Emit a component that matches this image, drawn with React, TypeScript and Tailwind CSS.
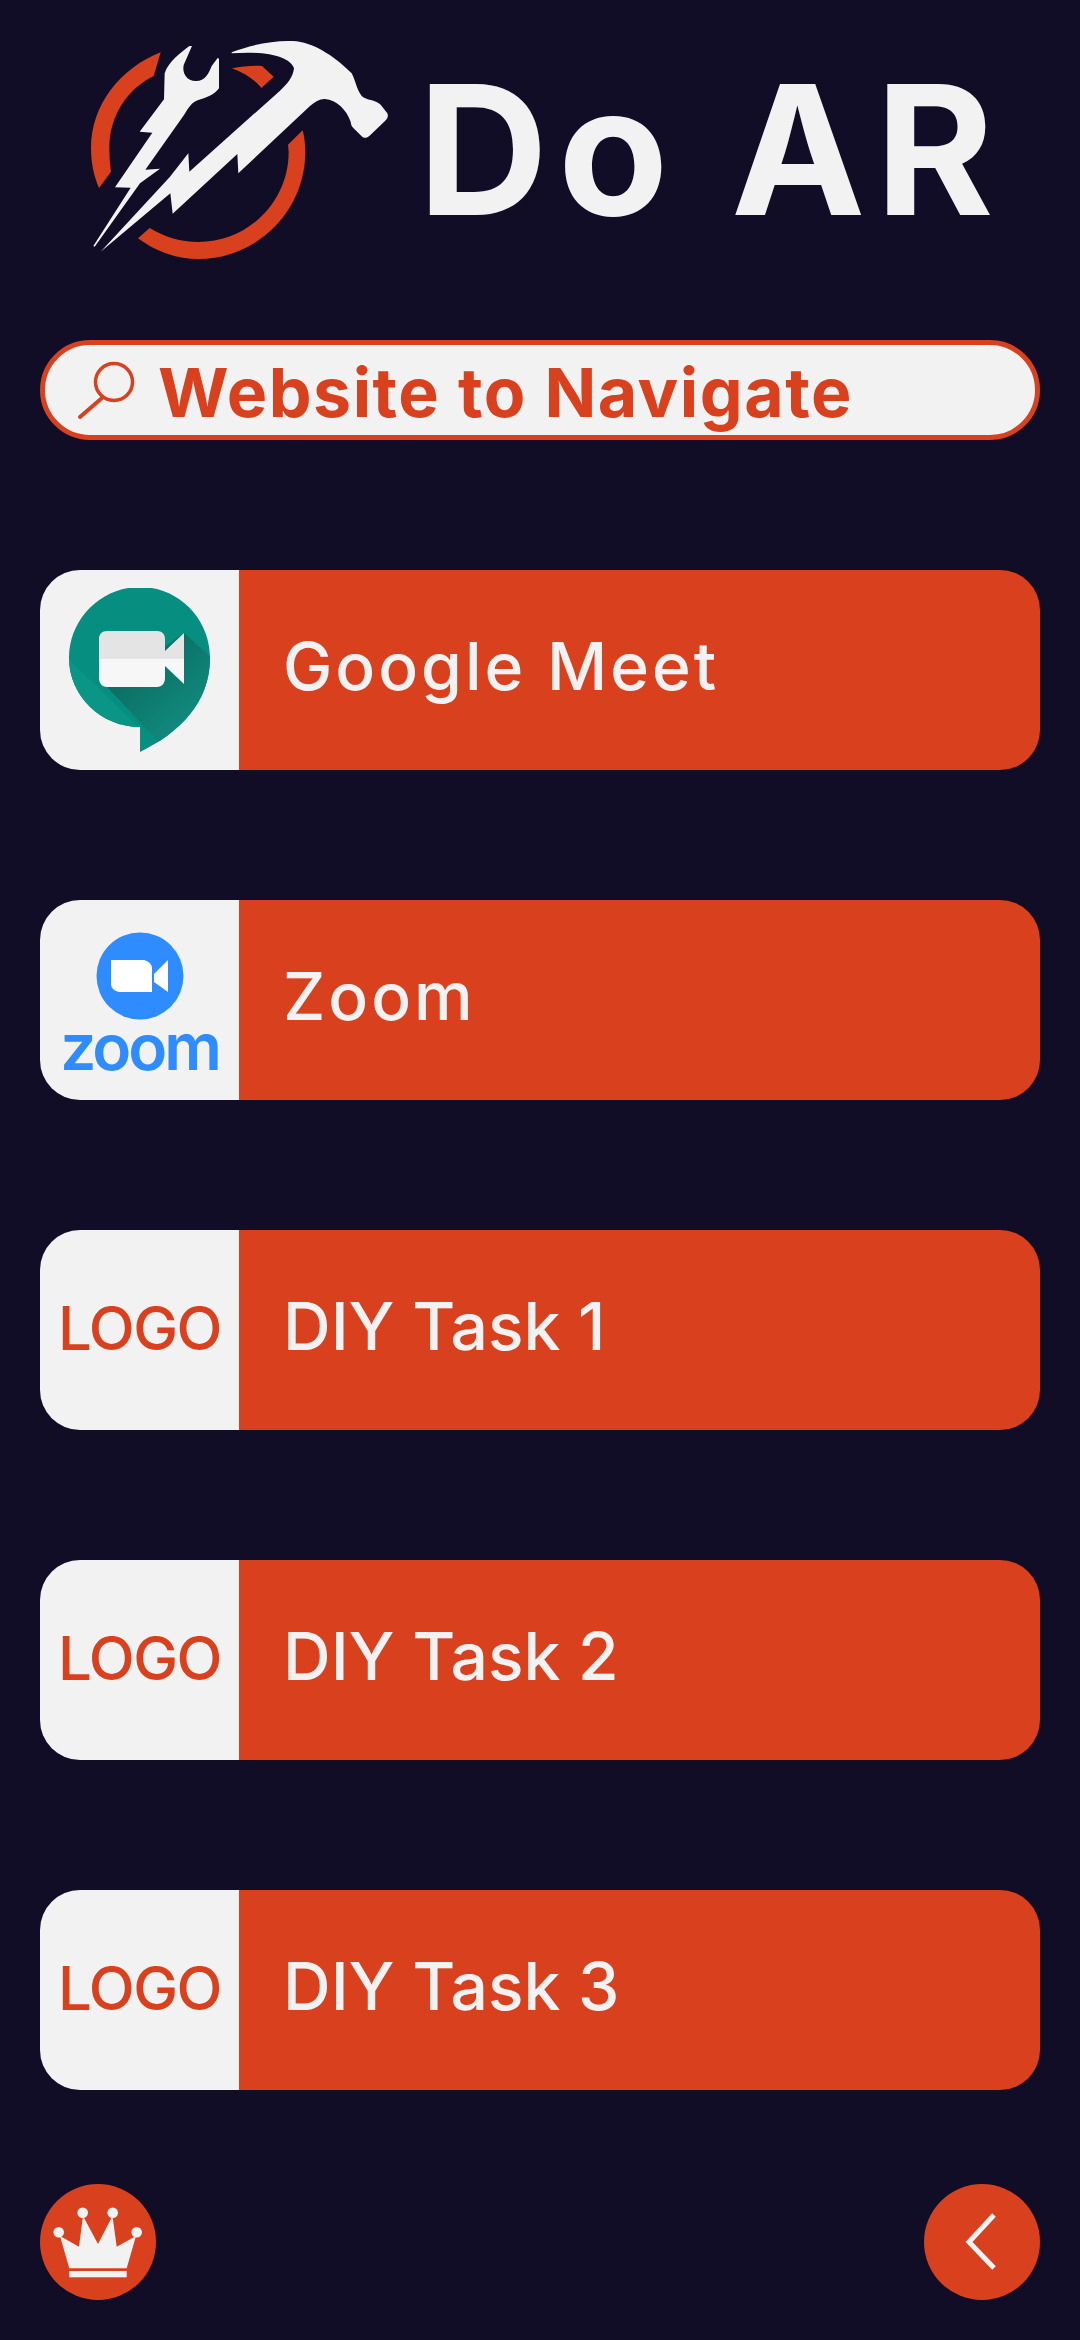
import React from 'react';

const font = { fontFamily: 'Inter, "Open Sans", sans-serif' };

const BrandLogo = () => (
  <svg viewBox="0 0 1080 750" className="w-[360px] h-[250px] shrink-0">
    {/* red ring pieces */}
    <path d="M302 97 L281 168 C205 205 148 285 148 385 C148 410 150 435 153 455 L117 504 C100 465 93 425 93 385 C93 255 180 145 302 97 Z" fill="#d9411e" />
    <path d="M516 145 C545 139 580 136 606 138 L641 170 L604 204 C585 180 555 160 516 145 Z" fill="#d9411e" />
    <path d="M728 331 C733 350 736 375 736 396 C736 572 592 717 415 717 C350 717 288 695 234 655 L269 624 C315 652 362 666 415 666 C565 666 686 545 686 396 L684 374 Z" fill="#d9411e" />
    {/* wrench and bolt */}
    <path d="M396 78 L371 135 C366 160 380 183 408 183 C436 183 446 160 455 138 L473 114 L477 116 L477 205 C465 222 440 234 415 240 C395 246 385 265 372 285 L256 449 L300 446 L240 490 L104 680 L100 678 L212 503 L165 502 L277 338 L239 335 L312 238 L314 160 C325 125 360 100 388 78 Z" fill="#f2f2f2" />
    {/* hammer and bolt */}
    <path d="M515 97 C570 75 650 58 710 64 C770 72 830 115 875 160 C888 185 888 205 905 228 C920 242 945 238 962 254 L982 280 C986 290 982 296 975 303 L932 344 C920 355 912 356 905 349 L880 324 C875 318 873 315 872 305 C860 270 830 240 795 237 C780 236 765 245 750 258 L535 460 L532 402 L338 581 L331 520 L122 695 L330 470 L385 400 L388 455 L660 212 C680 195 700 170 702 145 C690 110 620 92 515 100 Z" fill="#f2f2f2" />
  </svg>
);

const SearchIcon = () => (
  <svg viewBox="0 0 60 60" className="w-[60px] h-[60px] shrink-0">
    <circle cx="38" cy="22" r="18.500" fill="none" stroke="#d9411e" strokeWidth="3.5" />
    <path d="M26 38 L4 57" stroke="#d9411e" strokeWidth="4" strokeLinecap="round" />
  </svg>
);

const MeetIcon = () => (
  <svg viewBox="0 0 141 164" className="w-[141px] h-[164px] shrink-0">
    <defs>
      <clipPath id="bubble">
        <path d="M71 139 C32 139 0 108 0 70 C0 31 32 -1 71 -1 C110 -1 141 31 141 70 C141 115 110 145 71 164 Z" />
      </clipPath>
      <linearGradient id="shade" gradientUnits="userSpaceOnUse" x1="60" y1="85" x2="110" y2="140">
        <stop offset="0" stopColor="#0b6f65" />
        <stop offset="1" stopColor="#11897c" />
      </linearGradient>
    </defs>
    <g clipPath="url(#bubble)">
      <rect y="-2" width="141" height="166" fill="#068f80" />
      <path d="M0 72 L71 140 L71 164 L0 164 Z" fill="#0a9686" />
      <path d="M38 99 L115 45 L141 68 L141 164 L100 164 L87 151 Z" fill="url(#shade)" />
    </g>
    <path d="M38 43 L88 43 C93 43 96 46 96 51 L96 63 L115 45 L115 71 L30 71 L30 51 C30 46 33 43 38 43 Z" fill="#e4e4e4" />
    <path d="M30 71 L115 71 L115 96 L96 78 L96 90 C96 95 93 99 88 99 L38 99 C33 99 30 95 30 90 Z" fill="#f7f7f7" />
  </svg>
);

const ZoomIcon = () => (
  <div className="flex flex-col items-center pt-[1px]">
    <svg viewBox="0 0 88 88" className="w-[88px] h-[88px] shrink-0">
      <circle cx="44" cy="44" r="43.500" fill="#2e8cff" />
      <path d="M15 28 L47 28 C51 28 56 32 56 36 L56 60 L24 60 C19 60 15 56 15 52 Z" fill="#fff" />
      <path d="M58 42 L72 28 L72 60 L58 50 Z" fill="#fff" />
    </svg>
    <span className="mt-[5px] text-[#2e8cff] text-[64px] leading-[44px] font-semibold tracking-[-3px]" style={font}>zoom</span>
  </div>
);

const CrownIcon = () => (
  <svg viewBox="0 0 116 116" className="w-[116px] h-[116px]">
    <circle cx="58" cy="58" r="58" fill="#d9411e" />
    <g fill="#f2f2f2">
      <circle cx="18.7" cy="48.3" r="5.3" />
      <circle cx="42.7" cy="28.7" r="5.3" />
      <circle cx="72.7" cy="28.7" r="5.3" />
      <circle cx="96.7" cy="48.3" r="5.3" />
      <path d="M20 52 L39 62.700 L43 32 L58 60 L72.500 32 L76.700 62.700 L96 52 L86.700 84.300 L29.300 84.300 Z" />
      <rect x="29.300" y="87" width="57.400" height="6.300" />
    </g>
  </svg>
);

const BackIcon = () => (
  <svg viewBox="0 0 116 116" className="w-[116px] h-[116px]">
    <circle cx="58" cy="58" r="58" fill="#d9411e" />
    <path d="M70 31 L45 58 L70 84" fill="none" stroke="#f2f2f2" strokeWidth="5" />
  </svg>
);

const LogoWord = () => (
  <span className="text-[#d9411e] text-[60px] leading-none font-medium tracking-[-1.5px] pb-[4px]" style={font}>LOGO</span>
);

const buttons = [
  { label: 'Google Meet', icon: <MeetIcon />, tracking: 'tracking-[3px]' },
  { label: 'Zoom', icon: <ZoomIcon />, tracking: 'tracking-[3px]' },
  { label: 'DIY Task 1', icon: <LogoWord />, tracking: 'tracking-normal' },
  { label: 'DIY Task 2', icon: <LogoWord />, tracking: 'tracking-normal' },
  { label: 'DIY Task 3', icon: <LogoWord />, tracking: 'tracking-normal' },
];

export default function App() {
  return (
    <div className="w-[1080px] h-[2340px] bg-[#110d26] px-[40px] flex flex-col" style={font}>
      {/* Header */}
      <div className="h-[340px] pt-[20px] pl-[20px] flex items-start">
        <BrandLogo />
        <span className="ml-[-2px] mt-[40px] text-[#f2f2f2] text-[180px] leading-[180px] font-bold tracking-[10px] whitespace-nowrap">Do AR</span>
      </div>

      {/* Search */}
      <div className="h-[100px] rounded-full border-[5px] border-[#d9411e] bg-[#f2f2f2] flex items-center pl-[31px] gap-[22px]">
        <SearchIcon />
        <span className="text-[#d9411e] text-[68px] leading-none font-bold tracking-[1.5px] whitespace-nowrap pt-[4px]">Website to Navigate</span>
      </div>

      {/* Buttons */}
      <div className="mt-[130px] flex flex-col gap-[130px]">
        {buttons.map((b) => (
          <div key={b.label} className="h-[200px] rounded-[40px] overflow-hidden flex">
            <div className="w-[199px] bg-[#f2f2f2] flex items-center justify-center shrink-0">{b.icon}</div>
            <div className="flex-1 bg-[#d9411e] flex items-center pl-[44px] pb-[8px]">
              <span className={`text-[#f2f2f2] text-[66px] leading-none font-medium whitespace-nowrap ${b.tracking}`}>{b.label}</span>
            </div>
          </div>
        ))}
      </div>

      {/* Bottom */}
      <div className="mt-[94px] flex justify-between">
        <CrownIcon />
        <BackIcon />
      </div>
    </div>
  );
}
